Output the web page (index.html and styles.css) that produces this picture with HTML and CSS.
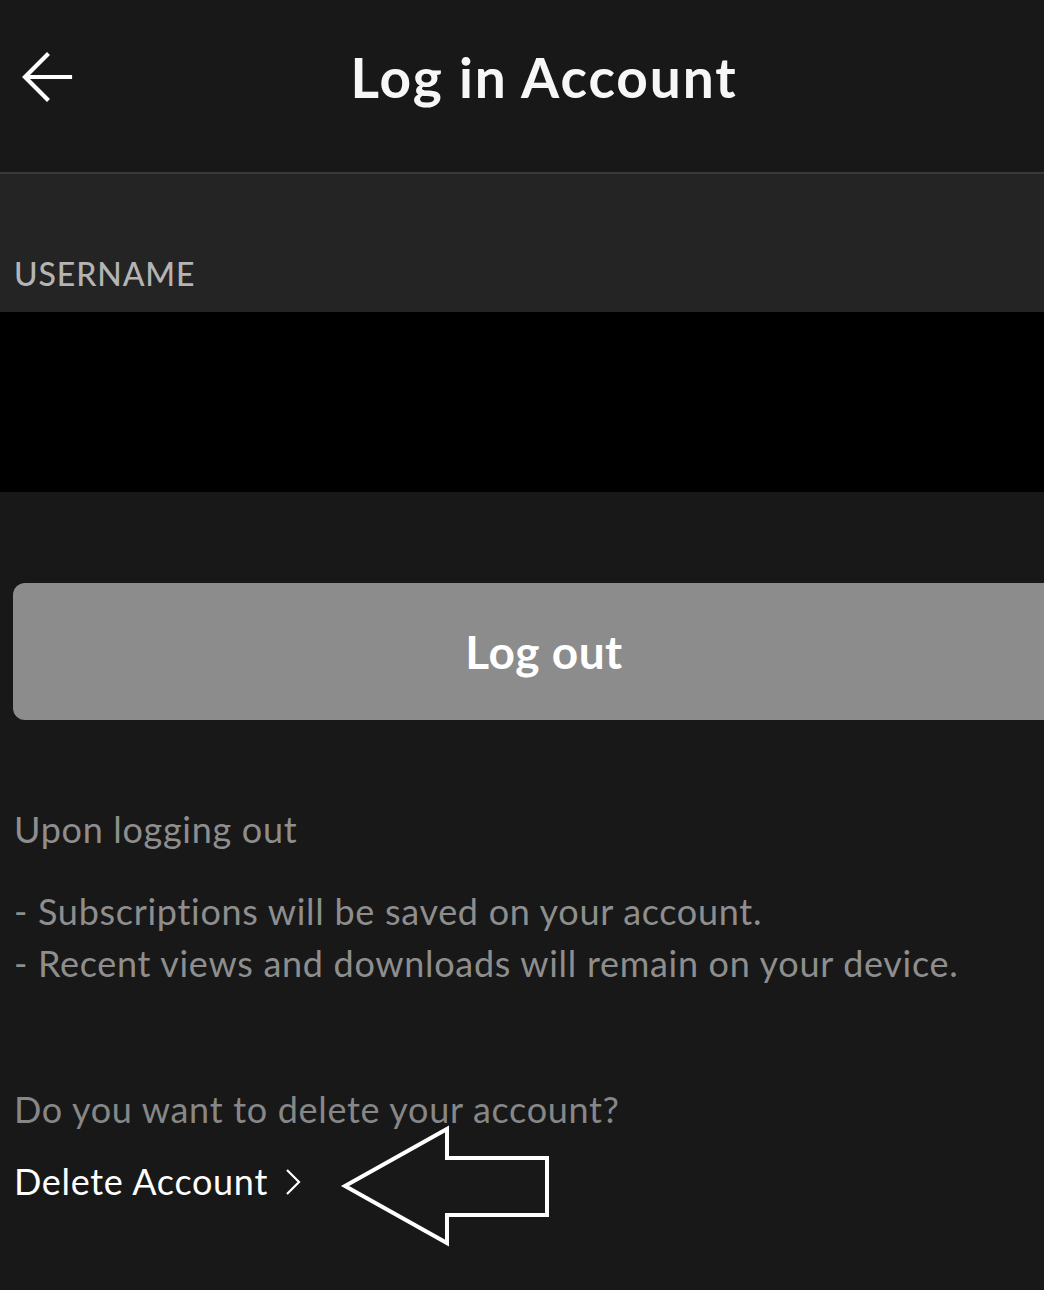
FILE: index.html
```html
<!DOCTYPE html>
<html lang="en">
<head>
<meta charset="utf-8">
<title>Log in Account</title>
<link rel="stylesheet" href="styles.css">
</head>
<body>
<div class="page">
  <header class="topbar">
    <button class="back" aria-label="Back">
      <svg width="52" height="52" viewBox="0 0 52 52"><path d="M48 25H4M25 3L3 25L25 47" fill="none" stroke="#ffffff" stroke-width="4.2" stroke-linecap="square" stroke-linejoin="miter"/></svg>
    </button>
    <h1 class="title">Log in Account</h1>
    <span class="spacer"></span>
  </header>

  <section class="field">
    <div class="field-label">USERNAME</div>
  </section>
  <div class="field-value"></div>

  <div class="actions">
    <button class="logout">Log out</button>
  </div>

  <div class="info">
    <p class="info-head">Upon logging out</p>
    <ul class="info-list">
      <li>- Subscriptions will be saved on your account.</li>
      <li>- Recent views and downloads will remain on your device.</li>
    </ul>
  </div>

  <div class="delete">
    <p class="delete-q">Do you want to delete your account?</p>
    <a class="delete-link" href="#">Delete Account
      <svg class="chev" width="16" height="28" viewBox="0 0 16 28"><path d="M2 2L14 14L2 26" fill="none" stroke="#ffffff" stroke-width="2.2"/></svg>
    </a>
    <svg class="pointer" width="212" height="124" viewBox="0 0 212 124"><polygon points="5,62 107,5 107,34 207,34 207,91 107,91 107,119" fill="none" stroke="#ffffff" stroke-width="4" stroke-linejoin="miter"/></svg>
  </div>
</div>
</body>
</html>
```
FILE: styles.css
```css
* { box-sizing: border-box; }
html, body { margin: 0; padding: 0; }
body {
  background: #181818;
  font-family: "Lato", "Open Sans", sans-serif;
  color: #ffffff;
  width: 1044px;
  overflow: hidden;
}
.page { width: 1044px; min-height: 1290px; overflow: hidden; }

.topbar {
  height: 154px;
  display: grid;
  grid-template-columns: 1fr auto 1fr;
  align-items: center;
  padding-left: 44px;
  padding-bottom: 18px;
  border-bottom: 2px solid #393939;
  box-sizing: content-box;
}
.back {
  justify-self: start;
  margin-left: -22px;
  margin-top: 2px;
  background: none;
  border: 0;
  padding: 0;
  width: 52px;
  height: 52px;
  display: flex;
}
.title {
  margin: 0;
  font-size: 55px;
  font-weight: 700;
  line-height: 1;
  letter-spacing: 1.9px;
  color: #f7f7f7;
}

.field {
  height: 138px;
  background: #242424;
  display: flex;
  align-items: flex-end;
  padding: 0 0 22px 14px;
}
.field-label {
  font-size: 32px;
  line-height: 32px;
  font-weight: 500;
  letter-spacing: 0.9px;
  color: #b4b4b4;
}
.field-value { height: 180px; background: #000000; }

.actions { padding-top: 91px; padding-left: 13px; }
.logout {
  width: 1062px;
  height: 137px;
  border: 0;
  border-radius: 12px;
  background: #8c8c8c;
  color: #ffffff;
  font-family: inherit;
  font-size: 46px;
  font-weight: 700;
  letter-spacing: 0.5px;
  display: flex;
  align-items: center;
  justify-content: center;
  padding: 0;
}

.info { padding: 83px 0 0 14px; color: #8e8e8e; font-size: 36px; line-height: 52px; letter-spacing: 0.7px; }
.info-head { margin: 0; }
.info-list { list-style: none; margin: 30px 0 0; padding: 0; }

.delete { position: relative; padding: 94px 0 0 14px; font-size: 36px; line-height: 52px; letter-spacing: 0.7px; }
.delete-q { margin: 0; color: #878787; }
.delete-link {
  margin-top: 20px;
  display: inline-flex;
  align-items: center;
  gap: 17px;
  color: #ffffff;
  text-decoration: none;
}
.chev { margin-top: 2px; }
.pointer { position: absolute; left: 340px; top: 135px; }
```
